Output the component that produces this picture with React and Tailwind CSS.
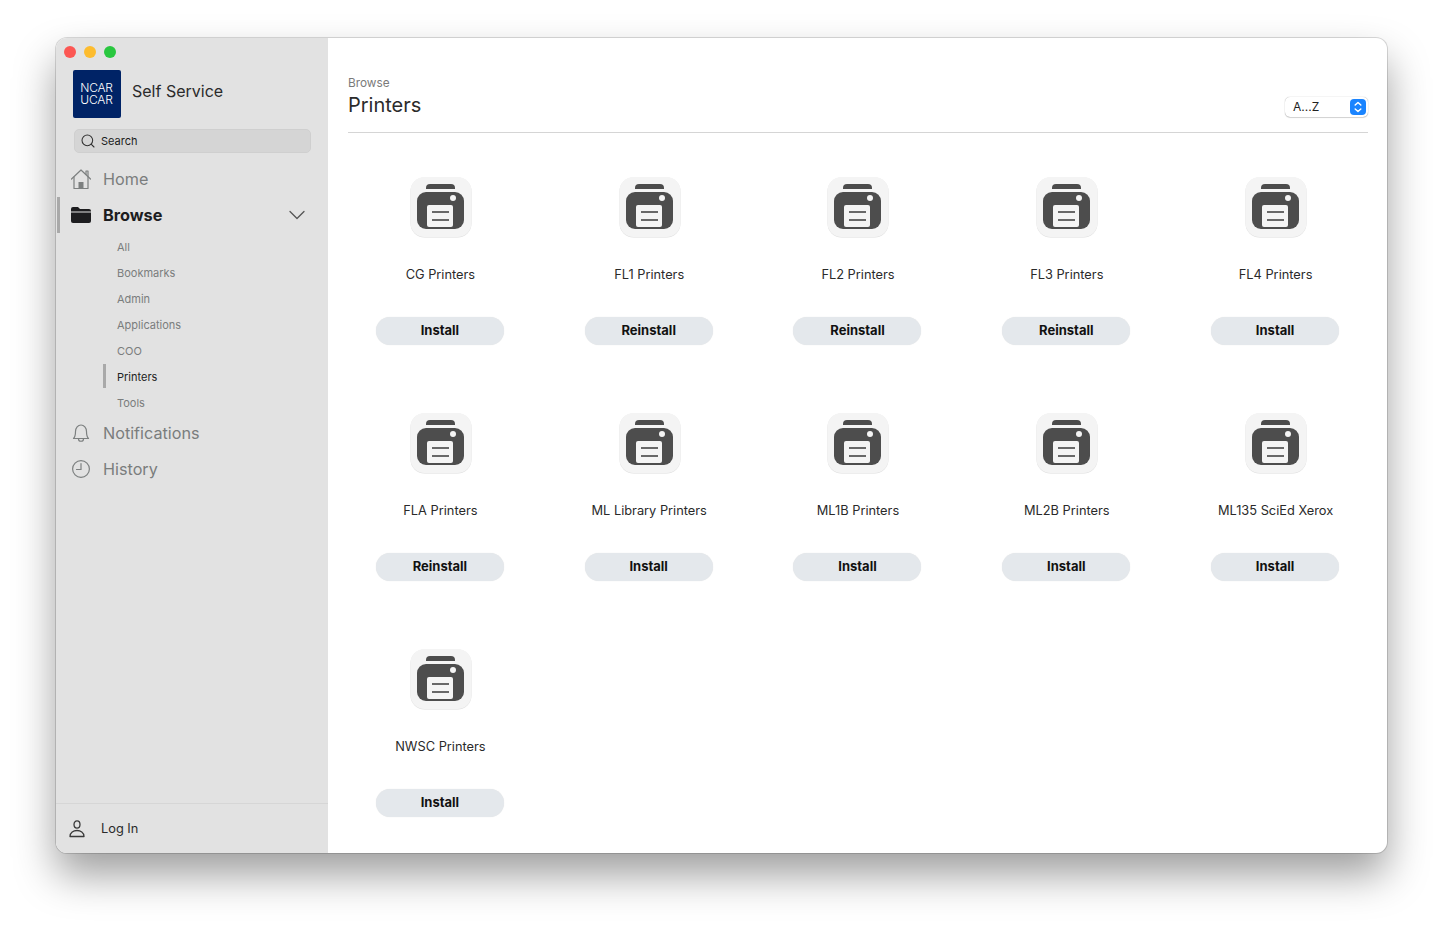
import React from "react";
import { Search, ChevronDown } from "lucide-react";

const printers = [
    { name: "CG Printers", action: "Install" },
    { name: "FL1 Printers", action: "Reinstall" },
    { name: "FL2 Printers", action: "Reinstall" },
    { name: "FL3 Printers", action: "Reinstall" },
    { name: "FL4 Printers", action: "Install" },
    { name: "FLA Printers", action: "Reinstall" },
    { name: "ML Library Printers", action: "Install" },
    { name: "ML1B Printers", action: "Install" },
    { name: "ML2B Printers", action: "Install" },
    { name: "ML135 SciEd Xerox", action: "Install" },
    { name: "NWSC Printers", action: "Install" },
];

const subItems = ["All", "Bookmarks", "Admin", "Applications", "COO", "Printers", "Tools"];

function PrinterIcon() {
    return (
        <svg width="62" height="62" viewBox="0 0 62 62" className="ml-px">
            <rect x="0.5" y="1.5" width="61" height="60" rx="14" fill="#dcdcdc" />
            <rect x="0.5" y="1" width="61" height="60" rx="14" fill="#f4f4f4" />
            <path d="M16 13 V12 a4 4 0 0 1 4-4 h21 a4 4 0 0 1 4 4 v1 z" fill="#4c4c4c" />
            <rect x="7" y="16" width="47" height="37" rx="9" fill="#4d4d4d" />
            <rect x="17" y="29" width="26" height="22" rx="2" fill="#f4f4f4" />
            <path d="M22 36 H39 M22 44 H39" stroke="#3a3a3a" strokeWidth="1.6" />
            <circle cx="43" cy="22" r="3" fill="#f4f4f4" />
        </svg>
    );
}

function HomeIcon() {
    return (
        <svg width="22" height="22" viewBox="0 0 22 22" fill="none" stroke="#7d8080" strokeWidth="1.2" strokeLinejoin="round" strokeLinecap="round">
            <path d="M1.5 11 L11 2 L20.5 11" />
            <path d="M16 6.5 V3 H18 V8.5" />
            <path d="M4 9 V20.5 H18 V9" />
            <rect x="8.5" y="14" width="5" height="6.5" fill="#7d8080" stroke="none" />
        </svg>
    );
}

function FolderIcon() {
    return (
        <svg width="20" height="18" viewBox="0 0 20 18">
            <path d="M0 3 a2 2 0 0 1 2-2 h5 l2 2 h9 a2 2 0 0 1 2 2 v0.5 H0 z" fill="#1d1d1f" />
            <path d="M0 6.5 H20 V15 a2 2 0 0 1-2 2 H2 a2 2 0 0 1-2-2 z" fill="#1d1d1f" />
        </svg>
    );
}

function BellIcon() {
    return (
        <svg width="18" height="20" viewBox="0 0 18 20" fill="none" stroke="#7d8080" strokeWidth="1.2" strokeLinejoin="round">
            <path d="M1.5 15.5 C3.5 13.5 3.5 12 3.5 8.5 C3.5 5 6 2 9 2 C12 2 14.5 5 14.5 8.5 C14.5 12 14.5 13.5 16.5 15.5 Z" />
            <path d="M6.5 16 C6.5 19 11.5 19 11.5 16" />
        </svg>
    );
}

function ClockIcon() {
    return (
        <svg width="20" height="20" viewBox="0 0 20 20" fill="none" stroke="#7d8080" strokeWidth="1.2" strokeLinecap="round">
            <circle cx="10" cy="10" r="8.4" />
            <path d="M10 4.5 V10.5 H5.5" />
        </svg>
    );
}

function UserIcon() {
    return (
        <svg width="16" height="18" viewBox="0 0 16 18" fill="none" stroke="#3a3a3a" strokeWidth="1.3" strokeLinejoin="round">
            <ellipse cx="8" cy="4.5" rx="3" ry="3.6" />
            <path d="M1 16.5 H15 C15 12.5 11.5 10.5 8 10.5 C4.5 10.5 1 12.5 1 16.5 Z" />
        </svg>
    );
}

function NavRow({ icon, label }) {
    return (
        <div className="flex h-[36px] items-center">
            <div className="flex w-[47px] justify-center pl-[3px]">{icon}</div>
            <span className="text-[16.2px] text-[#7a7d7d]">{label}</span>
        </div>
    );
}

function PrinterCard({ printer }) {
    return (
        <div className="flex flex-col items-center">
            <PrinterIcon />
            <div className="mt-[27px] h-[20px] text-[12.8px] leading-[20px] text-[#2a2a2a]">{printer.name}</div>
            <button className="mt-[32px] -ml-px h-[28px] w-[128px] rounded-full bg-[#e4e8ec] text-[13px] font-bold text-[#111] shadow-[0_0_1px_rgba(0,0,0,0.12)]">
                {printer.action}
            </button>
        </div>
    );
}

export default function App() {
    return (
        <div className="h-[927px] w-[1443px] overflow-hidden bg-white pl-[56px] pt-[38px] font-['Inter',sans-serif]">
            <div className="flex h-[815px] w-[1331px] overflow-hidden rounded-[11px] bg-white shadow-[0_0_0_1px_rgba(0,0,0,0.14),0_22px_42px_rgba(0,0,0,0.38)]">
                {/* sidebar */}
                <aside className="flex w-[272px] shrink-0 flex-col bg-[#e2e2e2]">
                    <div className="flex gap-2 pl-[8px] pt-[8px]">
                        <span className="h-[12px] w-[12px] rounded-full bg-[#fc5753]" />
                        <span className="h-[12px] w-[12px] rounded-full bg-[#fdbc2e]" />
                        <span className="h-[12px] w-[12px] rounded-full bg-[#29c73f]" />
                    </div>
                    <div className="mt-[12px] flex items-center pl-[17px]">
                        <div className="flex h-[48px] w-[48px] flex-col items-center justify-center rounded-[2px] bg-[#002366] pr-[1px] text-[12px] leading-[12px] font-light tracking-[-0.2px] text-white">
                            <span>NCAR</span>
                            <span>UCAR</span>
                        </div>
                        <span className="ml-[11px] -mt-[7px] text-[16px] text-[#2b2b2b]">Self Service</span>
                    </div>
                    <div className="mx-[18px] mt-[11px] flex h-[24px] w-[237px] items-center rounded-[5px] border border-[#cfcfcf] bg-[#d5d5d5] pl-[5px]">
                        <Search size={16} strokeWidth={1.6} className="text-[#333]" />
                        <span className="ml-[5px] text-[11px] text-[#1c1c1c]">Search</span>
                    </div>
                    <div className="mt-[8px]">
                        <NavRow icon={<HomeIcon />} label="Home" />
                        <div className="relative flex h-[36px] items-center">
                            <span className="absolute left-[1px] top-0 h-[36px] w-[3px] bg-[#a9a9a9]" />
                            <div className="flex w-[47px] justify-center pl-[3px]">
                                <FolderIcon />
                            </div>
                            <span className="text-[16.3px] font-bold text-[#1d1d1f]">Browse</span>
                            <ChevronDown size={28} strokeWidth={1.1} className="ml-auto mr-[17px] text-[#555]" />
                        </div>
                        <div className="mt-px -mb-px">
                            {subItems.map((item) => (
                                <div key={item} className="relative flex h-[26px] items-center pl-[61px]">
                                    {item === "Printers" && (
                                        <span className="absolute left-[47px] top-0 h-[24px] w-[3px] bg-[#a9a9a9]" />
                                    )}
                                    <span className={item === "Printers" ? "text-[11px] text-[#222]" : "text-[11px] text-[#7a7d7d]"}>
                                        {item}
                                    </span>
                                </div>
                            ))}
                        </div>
                        <NavRow icon={<BellIcon />} label="Notifications" />
                        <NavRow icon={<ClockIcon />} label="History" />
                    </div>
                    <div className="mt-auto flex h-[50px] items-center border-t border-[#d6d6d6] pl-[13px]">
                        <UserIcon />
                        <span className="ml-[16px] text-[12.8px] text-[#2b2b2b]">Log In</span>
                    </div>
                </aside>

                {/* main */}
                <main className="flex-1 pl-[8px] pr-[7px]">
                    <div className="mx-[12px] flex h-[95px] items-end justify-between border-b border-[#d5d5d5] pb-[14px]">
                        <div>
                            <div className="text-[11.8px] leading-[16px] text-[#7a7a7a]">Browse</div>
                            <div className="mt-[1px] text-[20px] leading-[26px] text-[#2b2b2b]">Printers</div>
                        </div>
                        <div className="mb-px flex h-[20px] w-[83px] items-center justify-between rounded-[5px] bg-white pl-[8px] pr-[2px] shadow-[0_0_1px_rgba(0,0,0,0.4),0_1px_1px_rgba(0,0,0,0.15)]">
                            <span className="text-[12px] text-[#222]">A...Z</span>
                            <span className="flex h-[16px] w-[16px] items-center justify-center rounded-[4px] bg-[#1a84ff]">
                                <svg width="8" height="12" viewBox="0 0 8 12" fill="none" stroke="white" strokeWidth="1.5" strokeLinecap="round" strokeLinejoin="round">
                                    <path d="M1.2 4 L4 1.5 L6.8 4" />
                                    <path d="M1.2 8 L4 10.5 L6.8 8" />
                                </svg>
                            </span>
                        </div>
                    </div>
                    <div className="mt-[43px] grid grid-cols-5 gap-y-[67px]">
                        {printers.map((printer) => (
                            <PrinterCard key={printer.name} printer={printer} />
                        ))}
                    </div>
                </main>
            </div>
        </div>
    );
}
